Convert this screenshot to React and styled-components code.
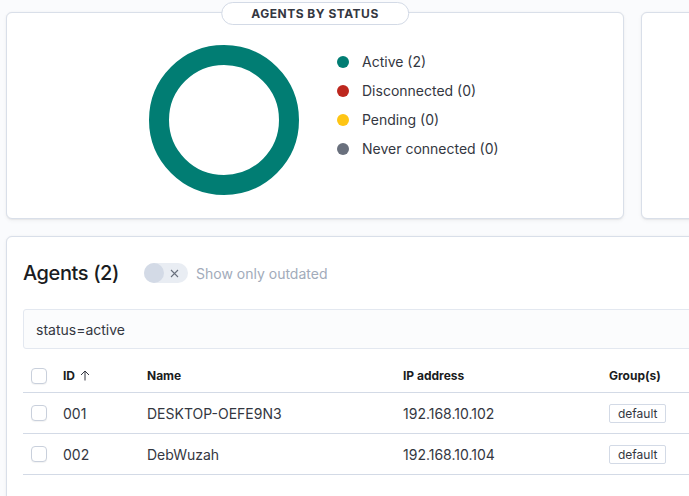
import React from "react";
import styled, { createGlobalStyle } from "styled-components";

const Global = createGlobalStyle`
  html, body { margin: 0; padding: 0; background: #FAFBFD; overflow: hidden; }
  body { font-family: Inter, "Noto Sans", sans-serif; color: #343741; -webkit-font-smoothing: antialiased; }
  * { box-sizing: border-box; }
`;

const Page = styled.div`
  width: 1260px;
  padding: 12px 0 0 6px;
  display: flex;
  flex-direction: column;
  gap: 17px;
`;

const TopRow = styled.div`
  display: flex;
  gap: 17px;
`;

const Panel = styled.div`
  position: relative;
  background: #fff;
  border: 1px solid #D9DFE9;
  border-radius: 6px;
  box-shadow: 0 0.7px 1.4px rgba(0,0,0,0.06), 0 1.9px 4px rgba(0,0,0,0.04);
  width: ${(p) => p.$width || "auto"};
  height: ${(p) => p.$height || "auto"};
  flex: ${(p) => (p.$grow ? 1 : "none")};
`;

const StatusPanel = styled(Panel)`
  display: flex;
  align-items: flex-start;
  padding: 32px 0 0 142px;
  gap: 38px;
`;

const TitlePill = styled.div`
  position: absolute;
  top: -11px;
  left: 50%;
  transform: translateX(-50%);
  height: 23px;
  padding: 0 29px;
  display: flex;
  align-items: center;
  background: #fff;
  border: 1px solid #D3DAE6;
  border-radius: 12px;
  font-size: 12px;
  font-weight: 700;
  letter-spacing: 0.5px;
  color: #343741;
  white-space: nowrap;
`;

const Legend = styled.ul`
  list-style: none;
  margin: 2px 0 0;
  padding: 0;
  display: flex;
  flex-direction: column;
`;

const LegendItem = styled.li`
  display: flex;
  align-items: center;
  gap: 13px;
  height: 29px;
  font-size: 14px;
  color: #343741;
`;

const Dot = styled.span`
  width: 12px;
  height: 12px;
  border-radius: 50%;
  background: ${(p) => p.$color};
  flex: none;
`;

const AgentsPanel = styled(Panel)`
  padding: 16px 16px 20px 16px;
  height: 280px;
`;

const Header = styled.div`
  display: flex;
  align-items: center;
  height: 40px;
`;

const Title = styled.h2`
  margin: 0;
  font-size: 20px;
  font-weight: 450;
  color: #1a1c21;
  letter-spacing: -0.4px;
`;

const Toggle = styled.span`
  margin-left: 25px;
  width: 44px;
  height: 20px;
  border-radius: 10px;
  background: #E9EDF3;
  position: relative;
  display: inline-flex;
  align-items: center;
`;

const Knob = styled.span`
  width: 20px;
  height: 20px;
  border-radius: 50%;
  background: #D3DAE6;
`;

const ToggleIcon = styled.svg`
  position: absolute;
  left: 26px;
  top: 6px;
`;

const ToggleLabel = styled.span`
  margin-left: 8px;
  font-size: 14px;
  color: #A2ABBA;
`;

const Search = styled.div`
  margin-top: 16px;
  height: 40px;
  display: flex;
  align-items: center;
  padding: 0 12px;
  background: #FBFCFD;
  border: 1px solid #E3E8F0;
  border-radius: 3px;
  font-size: 14px;
  color: #343741;
  width: 1300px;
`;

const Table = styled.div`
  margin-top: 10px;
  width: 1300px;
`;

const Row = styled.div`
  display: grid;
  grid-template-columns: 32px 84px 256px 206px 1fr;
  align-items: center;
  height: ${(p) => (p.$head ? "34px" : "41px")};
  border-bottom: 1px solid #D3DAE6;
`;

const Cell = styled.div`
  padding: 0 8px;
  display: flex;
  align-items: center;
  gap: 5px;
  font-size: ${(p) => (p.$head ? "12px" : "14px")};
  font-weight: ${(p) => (p.$head ? 700 : 400)};
  color: ${(p) => (p.$head ? "#1a1c21" : "#343741")};
`;

const Checkbox = styled.span`
  width: 16px;
  height: 16px;
  border: 1px solid #C9D0DC;
  border-radius: 4px;
  background: #fff;
  box-shadow: 0 1px 1px rgba(0,0,0,0.05);
`;

const Badge = styled.span`
  display: inline-flex;
  align-items: center;
  height: 19px;
  padding: 0 8px;
  border: 1px solid #D3DAE6;
  border-radius: 2px;
  font-size: 12px;
  color: #343741;
  background: #fff;
`;

const legend = [
  { label: "Active (2)", color: "#017D73" },
  { label: "Disconnected (0)", color: "#BD271E" },
  { label: "Pending (0)", color: "#FEC514" },
  { label: "Never connected (0)", color: "#69707D" },
];

const agents = [
  { id: "001", name: "DESKTOP-OEFE9N3", ip: "192.168.10.102", group: "default" },
  { id: "002", name: "DebWuzah", ip: "192.168.10.104", group: "default" },
];

export default function App() {
  return (
    <>
      <Global />
      <Page>
        <TopRow>
          <StatusPanel $width="618px" $height="207px">
            <TitlePill>AGENTS BY STATUS</TitlePill>
            <svg width="150" height="150" viewBox="0 0 150 150">
              <circle cx="75" cy="75" r="65" fill="none" stroke="#017D73" strokeWidth="20" />
            </svg>
            <Legend>
              {legend.map((l) => (
                <LegendItem key={l.label}>
                  <Dot $color={l.color} />
                  {l.label}
                </LegendItem>
              ))}
            </Legend>
          </StatusPanel>
          <Panel $width="618px" $height="207px" />
        </TopRow>
        <AgentsPanel>
          <Header>
            <Title>Agents (2)</Title>
            <Toggle>
              <Knob />
              <ToggleIcon width="9" height="9" viewBox="0 0 9 9">
                <path d="M1 1L8 8M8 1L1 8" stroke="#69707D" strokeWidth="1.1" fill="none" />
              </ToggleIcon>
            </Toggle>
            <ToggleLabel>Show only outdated</ToggleLabel>
          </Header>
          <Search>status=active</Search>
          <Table>
            <Row $head>
              <Cell $head><Checkbox /></Cell>
              <Cell $head>
                ID
                <svg width="10" height="11" viewBox="0 0 10 11">
                  <path d="M5 10.5V1M1 5L5 1L9 5" stroke="#343741" strokeWidth="1" fill="none" />
                </svg>
              </Cell>
              <Cell $head>Name</Cell>
              <Cell $head>IP address</Cell>
              <Cell $head>Group(s)</Cell>
            </Row>
            {agents.map((a) => (
              <Row key={a.id}>
                <Cell><Checkbox /></Cell>
                <Cell>{a.id}</Cell>
                <Cell>{a.name}</Cell>
                <Cell>{a.ip}</Cell>
                <Cell><Badge>{a.group}</Badge></Cell>
              </Row>
            ))}
          </Table>
        </AgentsPanel>
      </Page>
    </>
  );
}
